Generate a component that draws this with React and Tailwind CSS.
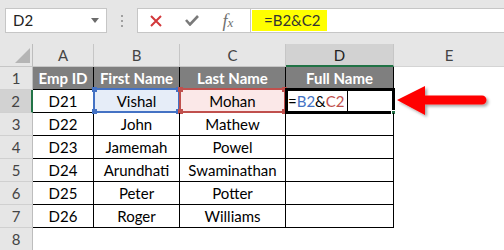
import React from "react";

const font = { fontFamily: "Lato, 'Open Sans', sans-serif" };

const data = [
  ["D21", "Vishal", "Mohan"],
  ["D22", "John", "Mathew"],
  ["D23", "Jamemah", "Powel"],
  ["D24", "Arundhati", "Swaminathan"],
  ["D25", "Peter", "Potter"],
  ["D26", "Roger", "Williams"],
];

function RowHeader({ n, selected }) {
  return (
    <div
      className={
        "flex items-center justify-center text-[15px] text-[#444] border-b border-[#d0d0d0] " +
        (selected
          ? "bg-[#d2d2d2] border-r-2 border-r-[#217346]"
          : "bg-[#e6e6e6] border-r border-r-[#bdbdbd]")
      }
    >
      {n}
    </div>
  );
}

function Handles({ color }) {
  const c = "absolute w-[5px] h-[5px] " + color;
  return (
    <>
      <div className={c + " -left-[3px] -top-[3px]"} />
      <div className={c + " -right-[3px] -top-[3px]"} />
      <div className={c + " -left-[3px] -bottom-[3px]"} />
      <div className={c + " -right-[3px] -bottom-[3px]"} />
    </>
  );
}

export default function App() {
  return (
    <div className="w-[504px] h-[250px] overflow-hidden bg-white relative" style={font}>
      {/* Formula bar */}
      <div className="h-[44px] bg-[#e6e6e6] flex items-start pt-[8px]">
        <div className="ml-[5px] w-[102px] h-[25px] bg-white border border-[#c6c6c6] flex items-center justify-between pl-[7px] pr-[7px]">
          <span className="text-[15px] text-[#222]">D2</span>
          <svg width="8" height="5" viewBox="0 0 8 5">
            <path d="M0 0 L8 0 L4 5 Z" fill="#6b6b6b" />
          </svg>
        </div>
        <div className="w-[30px] h-[25px] flex flex-col items-center justify-center gap-[3px]">
          <div className="w-[2px] h-[2px] bg-[#a0a0a0]" />
          <div className="w-[2px] h-[2px] bg-[#a0a0a0]" />
          <div className="w-[2px] h-[2px] bg-[#a0a0a0]" />
        </div>
        <div className="w-[114px] h-[25px] bg-white border border-[#c6c6c6] flex items-center">
          <div className="w-[36px] flex justify-center">
            <svg width="12" height="12" viewBox="0 0 12 12">
              <path d="M1 1 L11 11 M11 1 L1 11" stroke="#d2383b" strokeWidth="2" />
            </svg>
          </div>
          <div className="w-[36px] flex justify-center">
            <svg width="14" height="11" viewBox="0 0 14 11">
              <path d="M1 5 L5 9.5 L13 1" stroke="#7a7a7a" strokeWidth="2.6" fill="none" />
            </svg>
          </div>
          <div className="w-[36px] flex justify-center">
            <span
              className="text-[18px] italic text-[#707070] leading-none"
              style={{ fontFamily: "'Liberation Serif', serif" }}
            >
              f<span className="text-[13px]">x</span>
            </span>
          </div>
        </div>
        <div className="flex-1 h-[25px] bg-white border-y border-[#c6c6c6] flex items-stretch py-[1px] pl-[1px]">
          <div className="w-[75px] bg-[#ffff00] flex items-center pl-[12px] text-[15px] text-[#333]">
            =B2&amp;C2
          </div>
        </div>
      </div>

      {/* Grid */}
      <div className="grid grid-cols-[33px_61px_86px_106px_108px_1fr] grid-rows-[23px_23px_23px_23px_23px_23px_23px_23px_23px]">
        {/* column header row */}
        <div className="bg-[#e6e6e6] border-r border-[#bdbdbd] border-b border-b-[#c6c6c6] relative">
          <svg className="absolute left-[15px] top-[4px]" width="15" height="15" viewBox="0 0 15 15">
            <path d="M15 0 L15 15 L0 15 Z" fill="#b5b5b5" />
          </svg>
        </div>
        {["A", "B", "C"].map((c) => (
          <div
            key={c}
            className="bg-[#e6e6e6] border-r border-[#c6c6c6] border-b border-b-[#c6c6c6] flex items-center justify-center text-[15px] text-[#444] pt-[1px]"
          >
            {c}
          </div>
        ))}
        <div className="bg-[#d2d2d2] border-r border-[#c6c6c6] border-b-2 border-b-[#217346] flex items-center justify-center text-[15px] text-[#222] pt-[1px]">
          D
        </div>
        <div className="bg-[#e6e6e6] border-b border-b-[#d4d4d4] flex items-center justify-center text-[15px] text-[#444] pt-[1px]">
          E
        </div>

        {/* row 1 */}
        <RowHeader n={1} />
        {["Emp ID", "First Name", "Last Name", "Full Name"].map((h) => (
          <div
            key={h}
            className="bg-[#7f7f7f] border-r border-b border-black flex items-center justify-center text-[15px] font-bold text-white"
          >
            {h}
          </div>
        ))}
        <div />

        {/* data rows */}
        {data.map((r, i) => {
          const row = i + 2;
          const sel = row === 2;
          return (
            <React.Fragment key={row}>
              <RowHeader n={row} selected={sel} />
              <div className="border-r border-b border-black flex items-center justify-center text-[15px] text-black">
                {r[0]}
              </div>
              <div
                className={
                  "border-r border-b border-black flex items-center justify-center text-[15px] text-black relative " +
                  (sel ? "bg-[#e6edf8]" : "")
                }
              >
                {r[1]}
                {sel && (
                  <div className="absolute -left-[1px] -top-[2px] -right-[1px] -bottom-[1px] border-2 border-[#4472c4]">
                    <Handles color="bg-[#4472c4]" />
                  </div>
                )}
              </div>
              <div
                className={
                  "border-r border-b border-black flex items-center justify-center text-[15px] text-black relative " +
                  (sel ? "bg-[#fbe8e8]" : "")
                }
              >
                {r[2]}
                {sel && (
                  <div className="absolute -left-[1px] -top-[2px] -right-[1px] -bottom-[1px] border-2 border-[#c0504d]">
                    <Handles color="bg-[#c0504d]" />
                  </div>
                )}
              </div>
              <div className="border-r border-b border-black relative flex items-center text-[15px]">
                {sel && (
                  <div className="absolute -left-[1px] -top-[2px] -right-[2px] -bottom-[2px] border-[3px] border-black flex items-center pl-[0px]">
                    <span className="text-black">=</span>
                    <span className="text-[#4472c4]">B2</span>
                    <span className="text-black">&amp;</span>
                    <span className="text-[#c0504d]">C2</span>
                    <div className="ml-[2px] w-[1px] self-stretch bg-black" />
                    <div className="absolute -right-[4px] -bottom-[4px] w-[5px] h-[5px] bg-[#217346] border border-white" />
                  </div>
                )}
              </div>
              <div />
            </React.Fragment>
          );
        })}

        {/* row 8 */}
        <RowHeader n={8} />
        <div />
        <div />
        <div />
        <div />
        <div />
      </div>

      {/* Red arrow */}
      <svg className="absolute left-[394px] top-[83px]" width="100" height="38" viewBox="0 0 100 38">
        <defs>
          <filter id="sh" x="-10%" y="-20%" width="130%" height="160%">
            <feDropShadow dx="2" dy="2" stdDeviation="1.5" floodColor="#000" floodOpacity="0.35" />
          </filter>
        </defs>
        <path
          d="M3 17 L31 3 L31 12.5 L88 12.5 A4.5 4.5 0 0 1 88 21.5 L31 21.5 L31 32 Z"
          fill="#ff0000"
          filter="url(#sh)"
        />
      </svg>
    </div>
  );
}
